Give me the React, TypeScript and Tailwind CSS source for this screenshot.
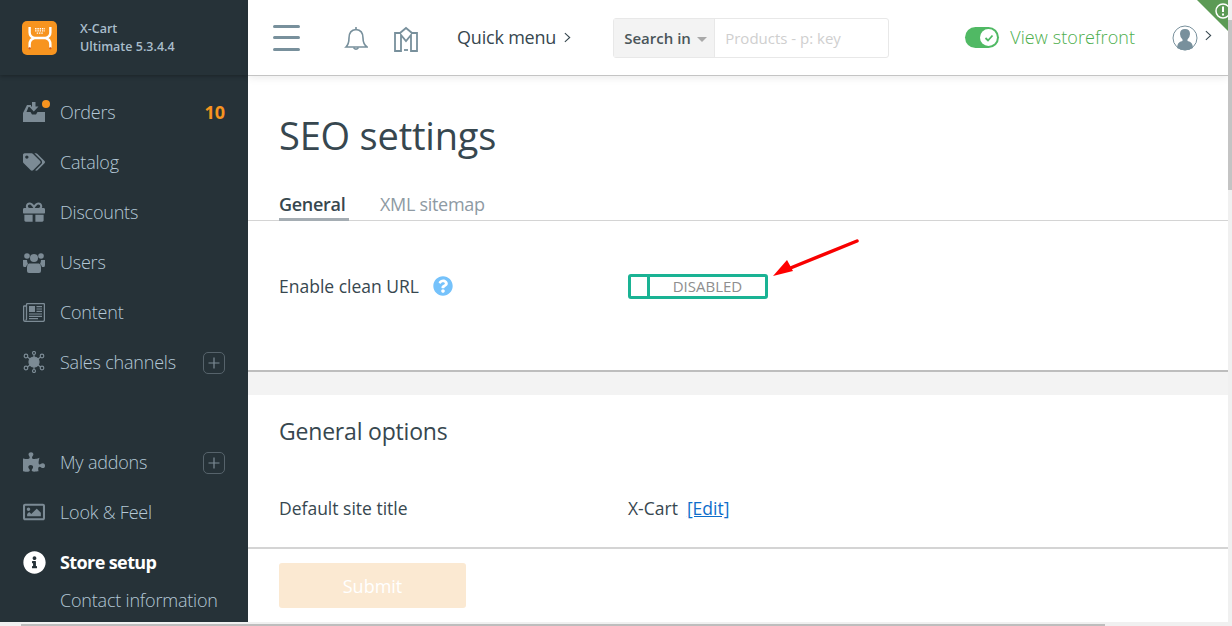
import React from 'react';
import { FaTags, FaGift, FaPuzzlePiece, FaRegImage, FaInfoCircle, FaQuestionCircle } from 'react-icons/fa';

const font = { fontFamily: '"Open Sans", sans-serif' };

const InboxIcon = () => (
  <svg viewBox="0 0 22 20" className="w-[22px] h-[20px]" fill="#7c8b95">
    <path d="M0 11 L4 3 H8 V5 H5.5 L3.5 10 H7.5 L9 12.5 H13 L14.5 10 H22 V20 H0 Z" />
    <path d="M9 0 H12.5 V4.5 H15.5 L10.8 9.5 L6 4.5 H9 Z" />
  </svg>
);

const UsersIcon = () => (
  <svg viewBox="0 0 22 21" className="w-[22px] h-[21px]" fill="#7c8b95">
    <circle cx="4" cy="4" r="2.8" />
    <circle cx="18" cy="4" r="2.8" />
    <circle cx="11" cy="6" r="4" />
    <path d="M0 8 H4 Q4 10 5 12 Q3.5 13 3 15 H1 Q0 15 0 13 Z" />
    <path d="M22 8 H18 Q18 10 17 12 Q18.5 13 19 15 H21 Q22 15 22 13 Z" />
    <path d="M6 11.5 H16 Q18 12 18 15 V19 Q18 21 16 21 H6 Q4 21 4 19 V15 Q4 12 6 11.5 Z" />
  </svg>
);

const NewsIcon = () => (
  <svg viewBox="0 0 22 19" className="w-[22px] h-[19px]">
    <path d="M3.5 3 H1 Q0.6 3 0.6 3.5 V16.5 Q0.6 18.4 2.5 18.4 H20 Q21.4 18.4 21.4 17 V1.6 Q21.4 0.6 20.4 0.6 H4.5 Q3.5 0.6 3.5 1.6 V16.5 Q3.5 17 2.5 17" fill="none" stroke="#7c8b95" strokeWidth="1.3" />
    <rect x="6" y="3" width="6" height="6" fill="#7c8b95" />
    <path d="M13.5 3.7 H19 M13.5 6 H19 M13.5 8.3 H19 M6 11 H19 M6 13.3 H19 M6 15.6 H15" stroke="#7c8b95" strokeWidth="1.2" />
  </svg>
);

const ChannelsIcon = () => (
  <svg viewBox="0 0 22 22" className="w-[22px] h-[22px]" fill="none" stroke="#7c8b95" strokeWidth="1.2">
    <path d="M11 11 L3 5 M11 11 L19 5 M11 11 L3 17 M11 11 L19 17 M11 11 V2 M11 11 V20" />
    <circle cx="11" cy="11" r="5" fill="#7c8b95" />
    <circle cx="3" cy="5" r="1.8" fill="#263238" />
    <circle cx="19" cy="5" r="1.8" fill="#263238" />
    <circle cx="3" cy="17" r="1.8" fill="#263238" />
    <circle cx="19" cy="17" r="1.8" fill="#263238" />
    <circle cx="11" cy="2" r="1.5" fill="#263238" />
    <circle cx="11" cy="20" r="1.5" fill="#263238" />
  </svg>
);

const PlusBox = () => (
  <div className="w-[22px] h-[22px] rounded-[5px] border border-[#56636b] flex items-center justify-center">
    <svg viewBox="0 0 12 12" className="w-3 h-3" stroke="#7c8b95" strokeWidth="1.2"><path d="M6 0.5 V11.5 M0.5 6 H11.5" /></svg>
  </div>
);

const Logo = () => (
  <div className="w-[35px] h-[34px] rounded-[5px] bg-[#f7941f] flex items-center justify-center">
    <svg viewBox="0 0 22 22" className="w-[24px] h-[24px]" fill="none">
      <path d="M1.5 1 V6 Q1.5 10 6 11 Q1.5 12 1.5 17 V20 M20.5 1 V6 Q20.5 10 16 11 Q20.5 12 20.5 17 V20 M6 11 H16" stroke="#fff" strokeWidth="2.2" />
      <path d="M6.5 2.5 H15.5 M6.5 4.5 H15.5 M8 6.5 H14" stroke="#fff" strokeWidth="1.3" strokeDasharray="1.3 0.8" />
      <circle cx="1.5" cy="20.5" r="1" fill="#c8562a" />
      <circle cx="20.5" cy="20.5" r="1" fill="#c8562a" />
    </svg>
  </div>
);

type NavItem = { label: string; icon: React.ReactNode; extra?: React.ReactNode; dot?: boolean };

const topItems: NavItem[] = [
  { label: 'Orders', icon: <InboxIcon />, dot: true, extra: <span className="text-[18px] font-bold text-[#f7941f]">10</span> },
  { label: 'Catalog', icon: <FaTags size={22} color="#7c8b95" /> },
  { label: 'Discounts', icon: <FaGift size={22} color="#7c8b95" /> },
  { label: 'Users', icon: <UsersIcon /> },
  { label: 'Content', icon: <NewsIcon /> },
  { label: 'Sales channels', icon: <ChannelsIcon />, extra: <PlusBox /> },
];

const bottomItems: NavItem[] = [
  { label: 'My addons', icon: <FaPuzzlePiece size={22} color="#7c8b95" />, extra: <PlusBox /> },
  { label: 'Look & Feel', icon: <FaRegImage size={22} color="#7c8b95" /> },
];

const NavRow = ({ item }: { item: NavItem }) => (
  <div className="h-[50px] flex items-center pl-[23px] pr-[23px]">
    <div className="relative w-[37px] flex items-center">
      {item.icon}
      {item.dot && <span className="absolute left-[19px] -top-[2px] w-[8px] h-[8px] rounded-full bg-[#f7941f]" />}
    </div>
    <span className="text-[18px] font-light tracking-[-0.2px] text-[#b4c8d6]">{item.label}</span>
    {item.extra && <div className="ml-auto mt-[1px]">{item.extra}</div>}
  </div>
);

const Sidebar = () => (
  <aside className="w-[248px] h-[622px] shrink-0 bg-[#263238] overflow-hidden flex flex-col">
    <div className="h-[75px] shrink-0 flex items-center pl-[22px] bg-[#263238] shadow-[0_1px_4px_rgba(0,0,0,0.3)]">
      <Logo />
      <div className="ml-[23px] text-[12.5px] leading-[18px] font-semibold text-[#a9bdcb]">
        <div>X-Cart</div>
        <div>Ultimate 5.3.4.4</div>
      </div>
    </div>
    <div className="pt-[12px]">
      {topItems.map(item => <NavRow key={item.label} item={item} />)}
    </div>
    <div className="pt-[50px]">
      {bottomItems.map(item => <NavRow key={item.label} item={item} />)}
    </div>
    <div className="h-[50px] flex items-center pl-[23px]">
      <div className="w-[37px]"><FaInfoCircle size={23} color="#fff" /></div>
      <span className="text-[18px] tracking-[-0.6px] font-bold text-white">Store setup</span>
    </div>
    <div className="pl-[60px] text-[18px] font-light tracking-[-0.2px] text-[#b4c8d6]">Contact information</div>
  </aside>
);

const Header = () => (
  <header className="relative h-[76px] shrink-0 bg-white border-b border-[#c4c4c4] flex items-center pl-[25px] shadow-[0_2px_8px_rgba(0,0,0,0.08)] z-10">
    <div className="w-[27px] flex flex-col gap-[8.5px]">
      <span className="h-[3px] bg-[#78909c] rounded-sm" />
      <span className="h-[3px] bg-[#78909c] rounded-sm" />
      <span className="h-[3px] bg-[#78909c] rounded-sm" />
    </div>
    <svg viewBox="0 0 24 26" className="w-[24px] h-[26px] ml-[44px] mt-[2px]" fill="none" stroke="#78909c" strokeWidth="1.6">
      <path d="M2 21 Q5 18 5 12 Q5 4 12 3.5 Q19 4 19 12 Q19 18 23 21 Z" />
      <path d="M12 1 V3.5 M9.5 21.5 Q12 25 14.5 21.5" />
    </svg>
    <svg viewBox="0 0 26 26" className="w-[26px] h-[26px] ml-[25px] mt-[2px]" fill="none" stroke="#78909c" strokeWidth="1.8">
      <path d="M2 7 H7 L13 2 L19 7 H24 V25 H18 V9 L13 15 L8 9 V25 H2 Z" />
      <path d="M11 24 H15" />
    </svg>
    <div className="ml-[38px] flex items-center text-[18px] tracking-[-0.2px] text-[#37474f]">
      Quick menu
      <svg viewBox="0 0 8 12" className="w-[7px] h-[11px] ml-[8px]" fill="none" stroke="#37474f" strokeWidth="1.3"><path d="M1 1 L6.5 6 L1 11" /></svg>
    </div>
    <div className="ml-[42px] flex h-[40px] w-[276px] rounded-[3px] border border-[#e8e8e8] mt-[1px]">
      <div className="w-[101px] bg-[#f3f3f3] flex items-center pl-[10px] text-[15px] font-semibold text-[#4a5559] border-r border-[#e8e8e8]">
        Search in
        <span className="ml-[6px] mt-[2px] w-0 h-0 border-x-[5px] border-x-transparent border-t-[5px] border-t-[#a9a9a9]" />
      </div>
      <div className="flex-1 flex items-center pl-[10px] text-[15px] text-[#cfcfcf]">Products - p: key</div>
    </div>
    <div className="ml-[76px] w-[34px] h-[21px] rounded-full bg-[#50b964] flex items-center justify-end pr-[2px]">
      <span className="w-[17px] h-[17px] rounded-full bg-white flex items-center justify-center">
        <svg viewBox="0 0 10 10" className="w-[10px] h-[10px]" fill="none" stroke="#50b964" strokeWidth="1.8"><path d="M1.5 5 L4 7.5 L8.5 2.5" /></svg>
      </span>
    </div>
    <span className="ml-[11px] text-[18px] font-light tracking-[0.1px] text-[#4cae4c]">View storefront</span>
    <svg viewBox="0 0 26 26" className="w-[26px] h-[26px] ml-[37px]">
      <circle cx="13" cy="13" r="12" fill="#fff" stroke="#78909c" strokeWidth="1" />
      <path d="M5 23 Q5 17 10.5 16 V14.5 Q8 12 8 9 Q8 4 13 4 Q18 4 18 9 Q18 12 15.5 14.5 V16 Q21 17 21 23 Q13 27.5 5 23 Z" fill="#78909c" />
    </svg>
    <svg viewBox="0 0 8 12" className="w-[7px] h-[11px] ml-[7px] -mt-[4px]" fill="none" stroke="#37474f" strokeWidth="1.2"><path d="M1 1 L6.5 6 L1 11" /></svg>
    <div className="absolute right-[-4px] top-0 w-[35px] h-[35px] overflow-hidden">
      <svg viewBox="0 0 35 35" className="w-[35px] h-[35px]">
        <path d="M0 0 H35 V35 Z" fill="#5c9a55" />
        <circle cx="26" cy="11" r="7" fill="none" stroke="#fff" strokeWidth="1.5" />
        <path d="M26 6.5 V12 M26 13.5 V15.5" stroke="#fff" strokeWidth="2" />
      </svg>
    </div>
  </header>
);

const SettingsCard = () => (
  <section className="h-[296px] shrink-0 bg-white border-b-2 border-[#bdbdbd]">
    <h1 className="pl-[31px] pt-[34px] text-[38px] leading-[50px] tracking-[-0.2px] text-[#37474f]">SEO settings</h1>
    <div className="mt-[32px] h-[29px] pl-[31px] flex gap-[31px] border-b border-[#d4d4d4] text-[18px]">
      <div className="w-[70px] h-[29px] border-b-[3px] border-[#a5adb3] font-semibold tracking-[-0.3px] text-[#37474f] leading-[24px]">General</div>
      <div className="text-[#8e9aa3] tracking-[-0.3px] leading-[24px]">XML sitemap</div>
    </div>
    <div className="mt-[52px] pl-[31px] flex items-center h-[26px]">
      <span className="w-[154px] text-[17.5px] text-[#37474f]">Enable clean URL</span>
      <FaQuestionCircle size={20} color="#75c2fb" className="-mt-[1px]" />
      <div className="ml-[175px] w-[140px] h-[25px] mt-[1px] rounded-[3px] border-[3px] border-[#1ab394] flex items-center">
        <span className="w-[19px] h-full border-r-[3px] border-[#1ab394]" />
        <span className="flex-1 text-center text-[15px] text-[#8e8e8e]">DISABLED</span>
      </div>
    </div>
  </section>
);

const OptionsCard = () => (
  <section className="flex-1 bg-white">
    <h2 className="pl-[31px] pt-[18px] text-[23px] leading-[36px] tracking-[-0.2px] text-[#37474f]">General options</h2>
    <div className="mt-[46px] pl-[31px] flex items-center h-[26px] text-[17.5px] text-[#37474f]">
      <span className="w-[349px]">Default site title</span>
      <span>X-Cart</span>
      <span className="ml-[9px] text-[#0e6ecb] underline">[Edit]</span>
    </div>
    <div className="mt-[26px] pl-[31px] pt-[14px] border-t-2 border-[#d4d4d4]">
      <div className="w-[187px] h-[45px] pt-[1px] rounded-[3px] bg-[#fbe9d2] flex items-center justify-center text-[18px] text-white">Submit</div>
    </div>
  </section>
);

export default function App() {
  return (
    <div className="relative w-[1232px] h-[626px] overflow-hidden bg-[#f3f3f3]" style={font}>
      <div className="flex h-[622px]">
        <Sidebar />
        <main className="w-[980px] flex flex-col">
          <Header />
          <SettingsCard />
          <div className="h-[23px] shrink-0 bg-[#f3f3f3]" />
          <OptionsCard />
        </main>
      </div>
      {/* red annotation arrow from the screenshot */}
      <svg className="absolute left-[770px] top-[236px] z-20" width="92" height="44" viewBox="0 0 92 44" fill="#ff0000">
        <path d="M87 5 L18 33" stroke="#f80000" strokeWidth="3.5" strokeLinecap="round" />
        <path d="M3 40 L17 24 L23 35 Z" />
      </svg>
      {/* browser scrollbars */}
      <div className="absolute right-0 top-0 w-[4px] h-[626px] bg-[#f0f0f0] z-20 pt-[20px]">
        <div className="w-full h-[170px] bg-[#c4c4c4]" />
      </div>
      <div className="absolute left-0 bottom-0 w-[1228px] h-[4px] bg-[#f0f0f0]">
        <div className="ml-[21px] w-[1084px] h-[2px] mt-[2px] bg-[#bdbdbd]" />
      </div>
    </div>
  );
}
